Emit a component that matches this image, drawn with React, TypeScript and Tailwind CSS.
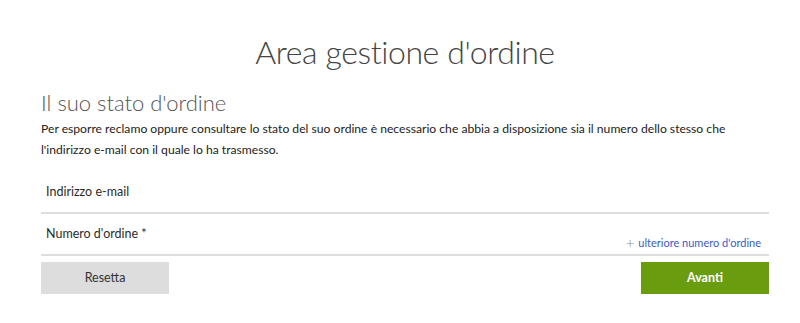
import React, { useState } from 'react';

export default function App() {
  const [email, setEmail] = useState('');
  const [orderNo, setOrderNo] = useState('');

  return (
    <div
      className="w-full h-[323px] bg-white pl-[41px] pr-[31px] text-[#333]"
      style={{ fontFamily: 'Lato, "Liberation Sans", sans-serif' }}
    >
      {/* Page title */}
      <h1 className="pt-[32px] text-center text-[32px] leading-[40px] font-light tracking-[-0.4px] text-[#444]">
        Area gestione d'ordine
      </h1>

      {/* Intro */}
      <h2 className="mt-[17px] text-[22px] leading-[28px] font-light text-[#555]">
        Il suo stato d'ordine
      </h2>
      <p className="mt-[1px] text-[12.15px] leading-[21px] text-[#222]">
        Per esporre reclamo oppure consultare lo stato del suo ordine è necessario che abbia a disposizione sia il numero dello stesso che l'indirizzo e-mail con il quale lo ha trasmesso.
      </p>

      {/* Form */}
      <form className="mt-[12px]" onSubmit={(e) => e.preventDefault()}>
        <label className="block border-b-2 border-[#dddddd] py-[10px] pl-[5px]">
          <span className="block text-[12.5px] leading-[20px] text-[#2b2b2b]">Indirizzo e-mail</span>
          <input
            value={email}
            onChange={(e) => setEmail(e.target.value)}
            className="sr-only"
          />
        </label>

        <div className="flex items-end justify-between border-b-2 border-[#dddddd] pt-[10px] pl-[5px]">
          <label className="block pb-[10px]">
            <span className="block text-[12.5px] leading-[20px] text-[#2b2b2b]">Numero d'ordine *</span>
            <input
              value={orderNo}
              onChange={(e) => setOrderNo(e.target.value)}
              className="sr-only"
            />
          </label>
          <a href="#" className="flex items-center gap-[4px] pb-[4px] pr-[8px] text-[11px] leading-[14px] text-[#3a5bc7]">
            <span className="text-[15px] font-light leading-[14px] text-[#8a8a8a]">+</span>
            ulteriore numero d'ordine
          </a>
        </div>

        <div className="mt-[6px] flex justify-between">
          <button
            type="reset"
            className="h-[32px] w-[128px] bg-[#dddddd] text-[12.5px] text-[#333]"
          >
            Resetta
          </button>
          <button
            type="submit"
            className="h-[32px] w-[128px] bg-[#6a9c0f] text-[12.5px] font-bold text-white"
          >
            Avanti
          </button>
        </div>
      </form>
    </div>
  );
}
